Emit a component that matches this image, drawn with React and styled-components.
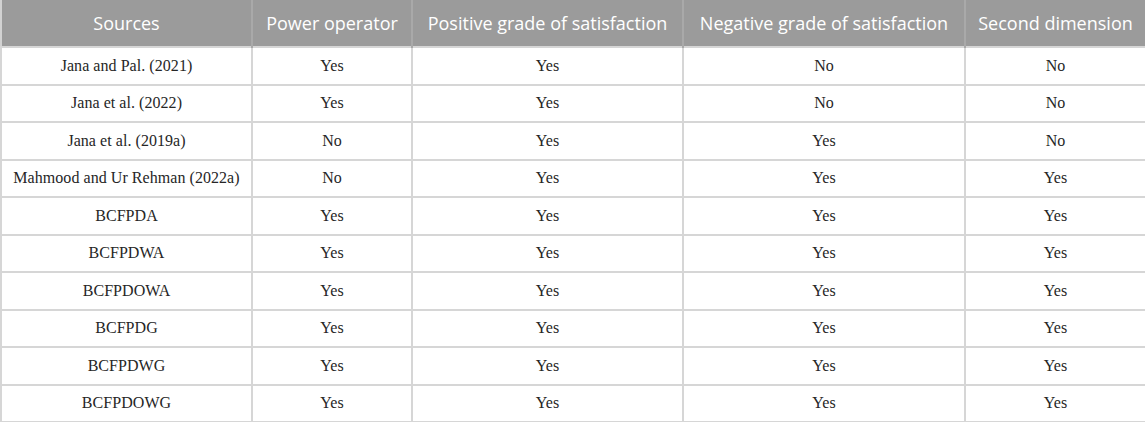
import styled, { createGlobalStyle } from "styled-components";

const GlobalStyle = createGlobalStyle`
  body {
    margin: 0;
    background: #ffffff;
  }
`;

const Table = styled.table`
  width: 1145px;
  table-layout: fixed;
  border-collapse: collapse;
  border: 2px solid #d2d2d2;
  border-top: none;
`;

const HeadCell = styled.th`
  height: 47px;
  padding: 0 2px;
  box-sizing: border-box;
  background: #9b9b9b;
  color: #ffffff;
  font-family: "Open Sans", "Noto Sans", sans-serif;
  font-weight: 400;
  font-size: 18px;
  text-align: center;
  white-space: nowrap;
  border-left: 2px solid #a9a9a9;
  &:first-child {
    border-left: none;
  }
`;

const Cell = styled.td`
  height: 37.5px;
  padding: 0 4px;
  box-sizing: border-box;
  font-family: "Liberation Serif", "Times New Roman", serif;
  font-size: 16px;
  letter-spacing: 0.05px;
  color: #262626;
  text-align: center;
  border: 2px solid #d6d6d6;
`;

const columns = [
  { title: "Sources", width: 251 },
  { title: "Power operator", width: 160 },
  { title: "Positive grade of satisfaction", width: 271 },
  { title: "Negative grade of satisfaction", width: 282 },
  { title: "Second dimension", width: 181 },
];

const rows = [
  ["Jana and Pal. (2021)", "Yes", "Yes", "No", "No"],
  ["Jana et al. (2022)", "Yes", "Yes", "No", "No"],
  ["Jana et al. (2019a)", "No", "Yes", "Yes", "No"],
  ["Mahmood and Ur Rehman (2022a)", "No", "Yes", "Yes", "Yes"],
  ["BCFPDA", "Yes", "Yes", "Yes", "Yes"],
  ["BCFPDWA", "Yes", "Yes", "Yes", "Yes"],
  ["BCFPDOWA", "Yes", "Yes", "Yes", "Yes"],
  ["BCFPDG", "Yes", "Yes", "Yes", "Yes"],
  ["BCFPDWG", "Yes", "Yes", "Yes", "Yes"],
  ["BCFPDOWG", "Yes", "Yes", "Yes", "Yes"],
];

export default function App() {
  return (
    <>
      <GlobalStyle />
      <Table>
        <colgroup>
          {columns.map((col) => (
            <col key={col.title} style={{ width: col.width }} />
          ))}
        </colgroup>
        <thead>
          <tr>
            {columns.map((col) => (
              <HeadCell key={col.title}>{col.title}</HeadCell>
            ))}
          </tr>
        </thead>
        <tbody>
          {rows.map((row) => (
            <tr key={row[0]}>
              {row.map((value, i) => (
                <Cell key={i}>{value}</Cell>
              ))}
            </tr>
          ))}
        </tbody>
      </Table>
    </>
  );
}
